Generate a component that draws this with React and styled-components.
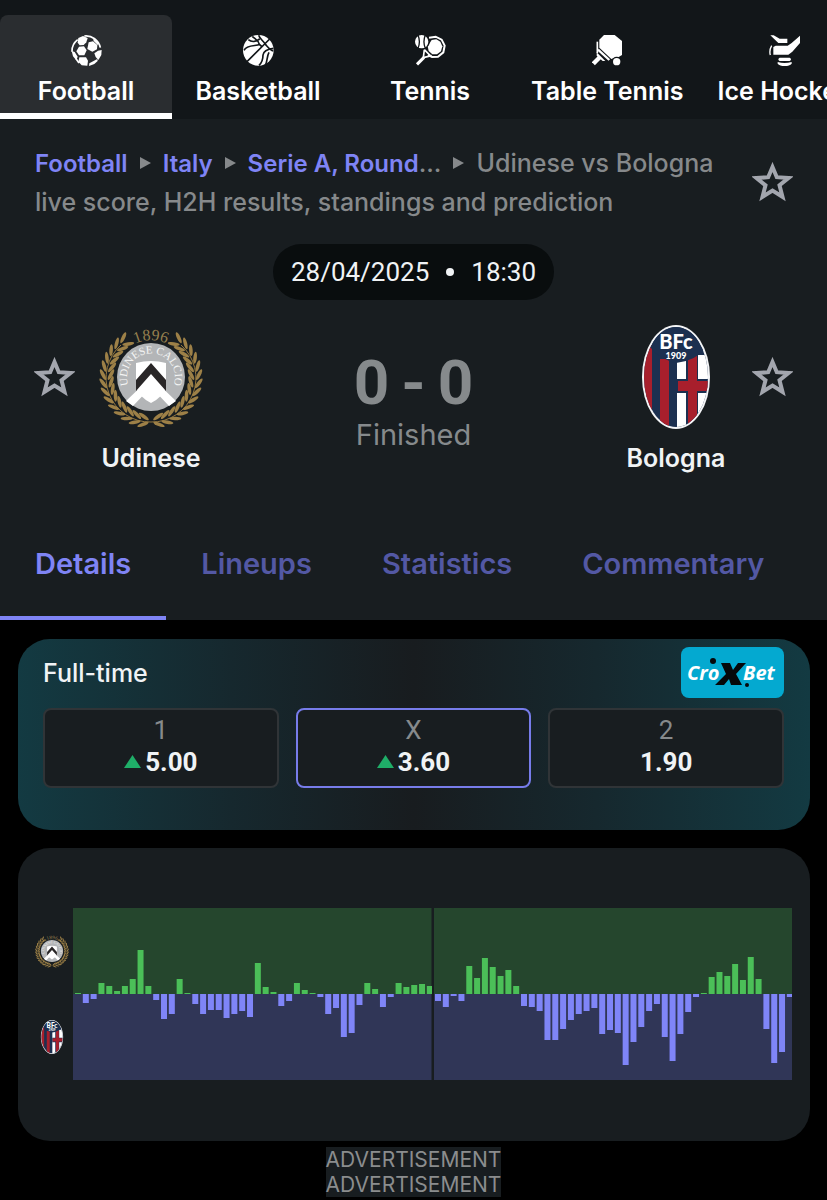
import React from "react";
import styled, { createGlobalStyle } from "styled-components";

const Global = createGlobalStyle`
  *, *::before, *::after { box-sizing: border-box; }
  body {
    margin: 0;
    background: #000;
    color: #f0f3f5;
    font-family: Inter, "Liberation Sans", sans-serif;
    font-size: 25px;
  }
  button { font: inherit; color: inherit; background: none; border: 0; padding: 0; cursor: pointer; }
  a { color: inherit; text-decoration: none; }
  h1, h2, p { margin: 0; font: inherit; }
`;

/* ---------- sports navigation ---------- */

const SportsNav = styled.nav`
  display: flex;
  padding-top: 15px;
  background: #121619;
  overflow-x: auto;
  scrollbar-width: none;
  &::-webkit-scrollbar { display: none; }
`;

const SportLink = styled.a`
  flex: none;
  display: flex;
  flex-direction: column;
  align-items: center;
  gap: 8px;
  min-width: 172px;
  padding: 20px 15px 4px;
  height: 104px;
  font-size: 25px;
  line-height: 34px;
  font-weight: 600;
  color: #fff;
  white-space: nowrap;
  border-bottom: 6px solid ${(p) => (p.$active ? "#fff" : "transparent")};
  border-radius: ${(p) => (p.$active ? "8px 8px 0 0" : "0")};
  background: ${(p) => (p.$active ? "#2a2d30" : "transparent")};
`;

const SportIcon = styled.svg`
  flex: none;
  width: 31px;
  height: 31px;
`;

/* ---------- match header ---------- */

const MatchHeader = styled.header`
  background: #181d20;
`;

const TitleRow = styled.div`
  display: flex;
  align-items: center;
  justify-content: space-between;
  padding: 25px 34px 0 35px;
`;

const Crumbs = styled.h1`
  flex: 1;
  max-width: 700px;
  font-size: 25px;
  line-height: 38px;
  font-weight: 500;
  color: #86898b;
`;

const CrumbLink = styled.a`
  color: #7f84f5;
  font-size: 24px;
  font-weight: 600;
`;

const ArrowIcon = styled.svg`
  width: 11px;
  height: 12px;
  margin: 0 12px;
  vertical-align: 3px;
`;

const StarButton = styled.button`
  flex: none;
  display: block;
  width: 41px;
  height: 41px;
  svg { display: block; width: 41px; height: 41px; }
`;

const Kickoff = styled.p`
  display: flex;
  align-items: center;
  justify-content: center;
  gap: 17px;
  width: fit-content;
  height: 56px;
  margin: 23px auto 0;
  padding: 0 18px;
  border-radius: 28px;
  background: #090d0e;
  font-family: Roboto, sans-serif;
  font-size: 26px;
`;

const Dot = styled.span`
  width: 8px;
  height: 8px;
  border-radius: 50%;
  background: #f0f3f5;
`;

const Scoreboard = styled.div`
  display: grid;
  grid-template-columns: 41px 152px 1fr 152px 41px;
  padding: 25px 34px 0 34px;
`;

const StarCell = styled.div`
  padding-top: 32px;
`;

const Team = styled.a`
  display: flex;
  flex-direction: column;
  align-items: center;
  gap: 12px;
  font-size: 25px;
  line-height: 34px;
  font-weight: 600;
`;

const Crest = styled.svg`
  display: block;
  width: ${(p) => p.$size}px;
  height: ${(p) => p.$size}px;
`;

const Result = styled.div`
  display: flex;
  flex-direction: column;
  align-items: center;
  gap: 3px;
  padding-top: 27px;
  color: #868a8c;
  font-size: 29px;
  line-height: 36px;
`;

const Score = styled.p`
  display: flex;
  justify-content: center;
  gap: 12px;
  font-family: Roboto, sans-serif;
  font-size: 62px;
  line-height: 62px;
  font-weight: 700;
`;

const Tabs = styled.nav`
  display: flex;
  margin-top: 33px;
  overflow: hidden;
`;

const Tab = styled.a`
  flex: none;
  padding: 34px 35px 30px;
  font-size: 29px;
  line-height: 44px;
  font-weight: 600;
  color: ${(p) => (p.$active ? "#7f84f5" : "#5358a4")};
  border-bottom: 4px solid ${(p) => (p.$active ? "#7f84f5" : "transparent")};
`;

/* ---------- cards ---------- */

const Main = styled.main`
  display: flex;
  flex-direction: column;
  gap: 18px;
  padding: 19px 17px 0 18px;
`;

const OddsCard = styled.section`
  padding: 8px 26px 42px 25px;
  border-radius: 32px;
  background: linear-gradient(90deg, #133a42 0%, #16282e 27%, #181c1f 50%, #16282e 73%, #133a42 100%);
`;

const OddsHead = styled.div`
  display: flex;
  align-items: center;
  justify-content: space-between;
  margin-bottom: 10px;
`;

const OddsTitle = styled.h2`
  font-size: 25px;
  line-height: 34px;
  font-weight: 500;
`;

const BookmakerLink = styled.a`
  display: block;
  width: 103px;
  height: 51px;
  svg { display: block; }
`;

const OddsRow = styled.div`
  display: grid;
  grid-template-columns: repeat(3, 1fr);
  gap: 17px;
`;

const OddsButton = styled.button`
  height: 80px;
  padding-bottom: 4px;
  display: flex;
  flex-direction: column;
  align-items: center;
  justify-content: center;
  border: 2px solid ${(p) => (p.$picked ? "#777cea" : "#303437")};
  border-radius: 8px;
  background: #181d20;
  font-family: Roboto, sans-serif;
  font-size: 26px;
  line-height: 32px;
`;

const Outcome = styled.span`
  color: #868a8c;
`;

const Price = styled.span`
  display: flex;
  align-items: center;
  gap: 4px;
  font-weight: 700;
  svg { width: 17px; height: 14px; }
`;

const MomentumCard = styled.section`
  display: grid;
  grid-template-columns: 34px 1fr;
  gap: 4px;
  padding: 60px 18px 61px 17px;
  border-radius: 32px;
  background: #181d20;
`;

const Sides = styled.div`
  display: flex;
  flex-direction: column;
  justify-content: space-around;
  align-items: center;
`;

const Halves = styled.div`
  display: grid;
  grid-template-columns: 1fr 1fr;
  gap: 2px;
  svg { display: block; width: 100%; height: 172px; }
`;

const Adverts = styled.p`
  width: fit-content;
  margin: 6px auto 0;
  background: #181d20;
  color: #8b8d8e;
  font-size: 21px;
  line-height: 25px;
  text-align: center;
  span { display: block; }
`;

/* ---------- icons ---------- */

const icons = {
  football: (
    <>
      <g fill="#fff">
        <path d="M24 35 39 34 47 46 40 61 24 61 16 49Z" />
        <path d="M53 22 66 19 79 30 78 43 64 50 49 42Z" />
        <path d="M22 9 36 3 50 9 46 22 38 30 26 31 20 23Z" />
        <path d="M25 67 45 67 51 77 49 92 32 91 22 80Z" />
        <path d="M81 47 92 45 91 60 82 75 74 66 70 55Z" />
        <path d="M2 48 11 51 20 65 16 76 6 64Z" />
        <path d="M55 85 79 72 80 78 70 87 54 93Z" />
      </g>
      <g fill="none" stroke="#fff" strokeWidth="5">
        <path d="M40 3A44 44 0 0 1 88 38" />
        <path d="M3 50A44 44 0 0 1 20 14" />
        <path d="M14 70 24 84" />
      </g>
      <path d="M66 8 84 24 80 30 68 18Z" fill="#fff" />
    </>
  ),
  basketball: (
    <>
      <circle cx="46" cy="46" r="46" fill="#fff" />
      <path
        fill="none"
        stroke="#121619"
        strokeWidth="5"
        d="M12 80 80 12M28 4 C36 12 46 15 49 28 C42 34 12 28 3 46M47 1 C50 12 62 18 68 29 C76 38 82 46 91 48M91 40 C74 42 62 46 60 60 C60 74 58 82 48 91M49 28 C52 31 54 33 58 35M66 92 C74 82 70 66 78 52M16 14 C26 22 40 20 50 12"
      />
    </>
  ),
  tennis: (
    <>
      <path fill="none" stroke="#fff" strokeWidth="6" d="M42 8 62 5 80 14 89 32 85 52 69 65 51 66 39 60" />
      <path fill="#fff" d="M50 15 64 13 76 20 82 34 78 49 66 58 52 58 41 48 38 34Z" />
      <path fill="none" stroke="#fff" strokeWidth="5" d="M28 44 25 68 50 62M28 44 48 64" />
      <path stroke="#fff" strokeWidth="9" d="M27 67 6 88" />
      <circle cx="20" cy="20" r="24" fill="#121619" />
      <circle cx="20" cy="20" r="20" fill="#fff" />
      <path fill="none" stroke="#121619" strokeWidth="4" d="M9 0C14 12 14 28 9 40M31 0C26 12 26 28 31 40" />
    </>
  ),
  tableTennis: (
    <>
      <path fill="#fff" d="M36 0H68L90 18V60L80 66 58 72 22 38V14Z" />
      <path fill="none" stroke="#fff" strokeWidth="5" d="M16 20V54" />
      <path stroke="#fff" strokeWidth="7" d="M18 44 52 75" />
      <path fill="#fff" d="M14 52 40 78H32L14 62Z" />
      <path stroke="#fff" strokeWidth="13" d="M24 66 4 86" />
      <circle cx="74" cy="80" r="15" fill="#121619" />
      <circle cx="74" cy="80" r="11" fill="#fff" />
    </>
  ),
  hockey: (
    <>
      <path fill="#fff" d="M4 1H14L32 11H55V24H28Z" />
      <path fill="#fff" d="M93 2V24L70 50 58 59H13V36L20 32H56L68 24Z" />
      <path stroke="#fff" strokeWidth="4" fill="none" d="M8 32Q0 46 4 60" />
      <path fill="#fff" d="M32 68H62Q70 73 62 78H32Q24 73 32 68Z" />
      <path fill="#fff" d="M26 81Q46 87 68 81V86Q62 93 47 93Q32 93 26 86Z" />
    </>
  ),
};

const sports = [
  ["Football", "football"],
  ["Basketball", "basketball"],
  ["Tennis", "tennis"],
  ["Table Tennis", "tableTennis"],
  ["Ice Hockey", "hockey"],
];

function Star({ label }) {
  return (
    <StarButton aria-label={label}>
      <svg viewBox="0 0 41 41">
        <path
          d="M20.5 5 24.8 15.2 36.5 16 27.5 23.3 30.5 34.8 20.5 28.6 10.5 34.8 13.5 23.3 4.5 16 16.2 15.2Z"
          fill="none"
          stroke="#a3a6ae"
          strokeWidth="4"
        />
      </svg>
    </StarButton>
  );
}

const Arrow = () => (
  <ArrowIcon viewBox="0 0 11 12" aria-hidden="true">
    <path d="M0 0 11 6 0 12Z" fill="#86898b" />
  </ArrowIcon>
);

const laurel = Array.from({ length: 14 }, (_, i) => 14 + i * 10.4);

function UdineseCrest({ size, id }) {
  return (
    <Crest $size={size} viewBox="0 0 104 104" aria-hidden="true">
      <defs>
        <path id={`${id}-year`} d="M24 28A37 37 0 0 1 80 28" />
        <path id={`${id}-name`} d="M30 62A24 24 0 1 1 74 62" />
      </defs>
      {[1, -1].map((side) => (
        <g key={side} transform={side === 1 ? undefined : "translate(104 0) scale(-1 1)"}>
          <path d="M52 97A44 44 0 0 1 22 20" fill="none" stroke="#96783f" strokeWidth="1" />
          {laurel.map((a) => (
            <g key={a} transform={`rotate(${a - 8} 52 52)`} fill="#9d8047">
              <ellipse cx="49" cy="92" rx="6" ry="1.8" transform="rotate(30 49 92)" />
              <ellipse cx="49" cy="100" rx="6" ry="1.8" transform="rotate(-26 49 100)" />
            </g>
          ))}
        </g>
      ))}
      <circle cx="52" cy="52" r="34" fill="#b3b5b7" />
      <path d="M52 52 27 76 34 81 52 62 70 81 77 76Z" fill="#fff" />
      <path d="M37 38Q52 34 67 38V62Q64 72 52 78Q40 72 37 62Z" fill="#fff" />
      <path d="M52 38 67 55V66L52 49 37 66V55Z" fill="#292627" />
      <g fontFamily="Liberation Serif, serif" fontWeight="400">
        <text fontSize="16" fill="#96804f" textAnchor="middle">
          <textPath href={`#${id}-year`} startOffset="50%">1896</textPath>
        </text>
        <text fontSize="11" fill="#f5f5f5" textAnchor="middle">
          <textPath href={`#${id}-name`} startOffset="50%">UDINESE CALCIO</textPath>
        </text>
      </g>
    </Crest>
  );
}

function BolognaCrest({ size, id }) {
  return (
    <Crest $size={size} viewBox="0 0 104 104" aria-hidden="true">
      <defs>
        <clipPath id={id}>
          <ellipse cx="52" cy="52" rx="32" ry="50" />
        </clipPath>
      </defs>
      <ellipse cx="52" cy="52" rx="34" ry="52" fill="#f4f5f7" />
      <g clipPath={`url(#${id})`}>
        <path fill="#1c3050" d="M18 0H86V104H18Z" />
        <path fill="#a81f2c" d="M18 20H28V104H18ZM36 34H45V104H36Z" />
        <path fill="#fff" d="M53 30H86V104H53Z" />
        <path fill="#1c3050" d="M62 30H74V104H62ZM53 54H86V68H53Z" />
        <path fill="#a81f2c" d="M64 30H73V104H64ZM54 56H86V66H54Z" />
        <path fill="#1c3050" d="M18 0H86V20Q72 36 52 38 36 34 26 22Z" />
      </g>
      <g fill="#fff" fontFamily="Lato, sans-serif" fontWeight="900" textAnchor="middle">
        <text x="52" y="24" fontSize="20">BFc</text>
        <text x="52" y="34" fontSize="9">1909</text>
      </g>
    </Crest>
  );
}

function CroxBetLogo() {
  return (
    <svg viewBox="0 0 103 51" width="103" height="51" aria-hidden="true">
      <rect width="103" height="51" rx="8" fill="#04a9d0" />
      <g fontFamily="Open Sans, sans-serif" fontStyle="italic" fontWeight="700" fill="#fff" fontSize="20">
        <text x="6" y="33">Cro</text>
        <text x="62" y="33">Bet</text>
      </g>
      <path d="M40 16H49L52 23 57 16H65L55 27 61 38H50L48 32 43 38H34L45 27Z" fill="#05080a" />
      <circle cx="32" cy="14" r="3" fill="#05080a" />
      <circle cx="66" cy="38" r="2" fill="#05080a" />
    </svg>
  );
}

/* ---------- momentum data, positive for the home side ---------- */

const firstHalf = [
  1, -9, -5, 11, 8, 3, 8, 15, 44, 8, -6, -25, -20, 15, 1, -10, -20, -16, -16, -24, -20, -17, -23,
  31, 7, 2, -12, -7, 11, 4, 1, -3, -20, -14, -43, -39, -11, 11, 5, -13, -3, 11, 7, 9, 10, 8,
];

const secondHalf = [
  -7, -13, -2, -7, 28, 16, 36, 27, 18, 24, 8, -12, -13, -17, -46, -46, -35, -26, -20, -17, -14, -40,
  -36, -39, -71, -48, -33, -17, -10, -43, -67, -40, -18, -3, 1, 17, 22, 18, 30, 14, 37, 15, -35, -69,
  -58, -3,
];

function Half({ values, offset, label }) {
  const pitch = 7.83;
  return (
    <svg viewBox="0 0 359 172" preserveAspectRatio="none" role="img" aria-label={label}>
      <rect width="359" height="86" fill="#25462d" />
      <rect y="86" width="359" height="86" fill="#303657" />
      {values.map((v, i) => (
        <rect
          key={i}
          x={offset + i * pitch}
          y={v > 0 ? 86 - v : 86}
          width="6"
          height={Math.abs(v)}
          fill={v > 0 ? "#4bbf58" : "#7f85f7"}
        />
      ))}
    </svg>
  );
}

const odds = [
  { outcome: "1", price: "5.00", up: true },
  { outcome: "X", price: "3.60", up: true, picked: true },
  { outcome: "2", price: "1.90" },
];

export default function App() {
  return (
    <>
      <Global />
      <SportsNav aria-label="Sports">
        {sports.map(([name, icon], i) => (
          <SportLink key={name} href="#" $active={i === 0}>
            <SportIcon viewBox="0 0 93 93" aria-hidden="true">{icons[icon]}</SportIcon>
            {name}
          </SportLink>
        ))}
      </SportsNav>

      <MatchHeader>
        <TitleRow>
          <Crumbs>
            <CrumbLink href="#">Football</CrumbLink>
            <Arrow />
            <CrumbLink href="#">Italy</CrumbLink>
            <Arrow />
            <CrumbLink href="#">Serie A, Round</CrumbLink>...
            <Arrow />
            Udinese vs Bologna live score, H2H results, standings and prediction
          </Crumbs>
          <Star label="Follow match" />
        </TitleRow>

        <Kickoff>
          <span>28/04/2025</span>
          <Dot />
          <span>18:30</span>
        </Kickoff>

        <Scoreboard>
          <StarCell><Star label="Follow Udinese" /></StarCell>
          <Team href="#">
            <UdineseCrest size={104} id="udinese" />
            Udinese
          </Team>
          <Result>
            <Score><span>0</span><span>-</span><span>0</span></Score>
            <span>Finished</span>
          </Result>
          <Team href="#">
            <BolognaCrest size={104} id="bologna" />
            Bologna
          </Team>
          <StarCell><Star label="Follow Bologna" /></StarCell>
        </Scoreboard>

        <Tabs aria-label="Match sections">
          {["Details", "Lineups", "Statistics", "Commentary"].map((name, i) => (
            <Tab key={name} href="#" $active={i === 0}>{name}</Tab>
          ))}
        </Tabs>
      </MatchHeader>

      <Main>
        <OddsCard>
          <OddsHead>
            <OddsTitle>Full-time</OddsTitle>
            <BookmakerLink href="#" aria-label="CroXBet"><CroxBetLogo /></BookmakerLink>
          </OddsHead>
          <OddsRow>
            {odds.map((o) => (
              <OddsButton key={o.outcome} $picked={o.picked}>
                <Outcome>{o.outcome}</Outcome>
                <Price>
                  {o.up && (
                    <svg viewBox="0 0 17 14" aria-hidden="true">
                      <path d="M8.5 0 17 13H0Z" fill="#1fae68" />
                    </svg>
                  )}
                  {o.price}
                </Price>
              </OddsButton>
            ))}
          </OddsRow>
        </OddsCard>

        <MomentumCard>
          <Sides>
            <UdineseCrest size={34} id="udinese-small" />
            <BolognaCrest size={34} id="bologna-small" />
          </Sides>
          <Halves>
            <Half values={firstHalf} offset={2} label="First half momentum" />
            <Half values={secondHalf} offset={1} label="Second half momentum" />
          </Halves>
        </MomentumCard>
      </Main>

      <Adverts>
        <span>ADVERTISEMENT</span>
        <span>ADVERTISEMENT</span>
      </Adverts>
    </>
  );
}
